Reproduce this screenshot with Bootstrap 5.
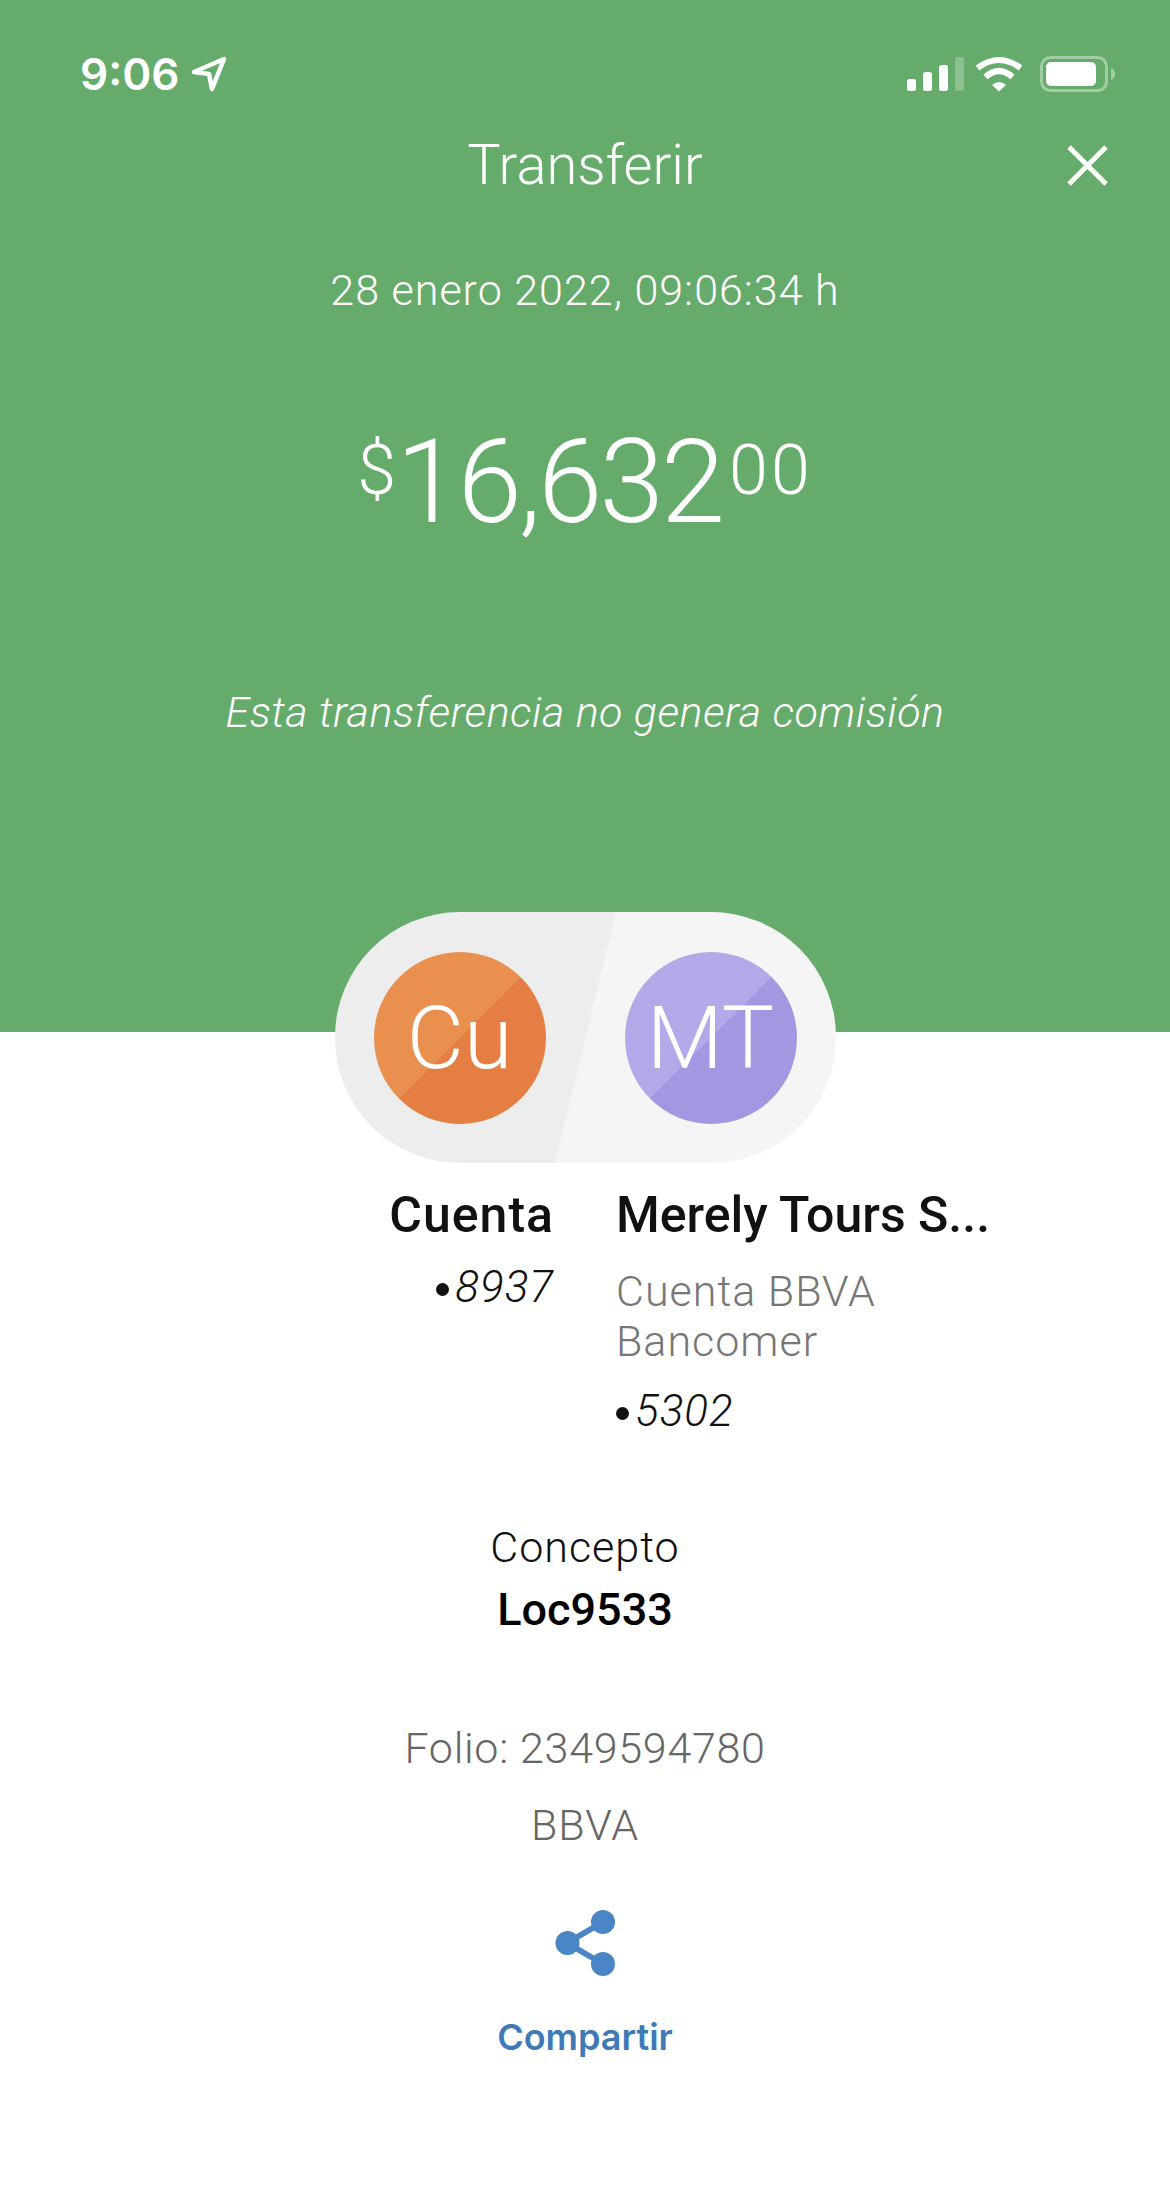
<!DOCTYPE html>
<html lang="es">
<head>
    <meta charset="UTF-8">
    <meta name="viewport" content="width=device-width, initial-scale=1.0">
    <title>Transferir</title>
    <link href="https://cdn.jsdelivr.net/npm/bootstrap@5.3.0/dist/css/bootstrap.min.css" rel="stylesheet">
    <style>
        body {
            background-color: #fff;
            font-family: Roboto, "Liberation Sans", sans-serif;
            font-weight: 300;
            color: #111;
        }
        .hero {
            background-color: #65ab6c;
            color: #fff;
            height: 1032px;
            text-align: center;
        }
        .status-bar {
            padding: 56px 55px 0 80px;
            height: 92px;
        }
        .clock {
            font-family: Inter, sans-serif;
            font-weight: 600;
            font-size: 44px;
            line-height: 36px;
            margin-right: 4px;
        }
        .title-row {
            margin-top: 43px;
            height: 60px;
            padding: 0 62px;
        }
        .title-text {
            font-size: 56px;
            line-height: 60px;
        }
        .title-side {
            width: 41px;
        }
        .date-text {
            margin-top: 70px;
            font-size: 43px;
            line-height: 50px;
            letter-spacing: 1px;
        }
        .amount {
            margin-top: 102px;
            height: 130px;
            font-size: 116px;
            line-height: 130px;
            letter-spacing: -3px;
        }
        .amount-sup {
            font-size: 70px;
            line-height: 68px;
            letter-spacing: 3px;
            align-self: flex-start;
            margin-top: 19px;
        }
        .sup-currency {
            letter-spacing: 0;
        }
        .sup-cents {
            margin-left: 7px;
        }
        .no-fee {
            margin-top: 140px;
            font-size: 43px;
            line-height: 50px;
            letter-spacing: .5px;
            font-style: italic;
        }
        .pill {
            width: 501px;
            height: 251px;
            margin: -120px auto 0;
            padding: 0 39px;
            border-radius: 125px;
            background: linear-gradient(103.66deg, #ededed 50%, #f5f5f5 50%);
            position: relative;
        }
        .avatar {
            width: 172px;
            height: 172px;
            color: #fff;
            font-size: 88px;
        }
        .avatar-orange {
            background: linear-gradient(135deg, #e9904f 50%, #e47e42 50%);
        }
        .avatar-purple {
            background: linear-gradient(135deg, #b3a9e9 50%, #a497e2 50%);
        }
        .names {
            margin-top: 24px;
        }
        .name-left {
            padding-right: 31px;
        }
        .name-left .name-text {
            letter-spacing: 1px;
        }
        .name-right {
            padding-left: 31px;
        }
        .name-text {
            font-weight: 500;
            font-size: 50px;
            line-height: 56px;
            white-space: nowrap;
        }
        .acct {
            font-size: 44px;
            line-height: 50px;
            letter-spacing: 1px;
            font-style: italic;
            color: #111;
        }
        .acct-left {
            margin-top: 19px;
        }
        .acct-right {
            margin-top: 20px;
        }
        .dot {
            display: inline-block;
            width: 13px;
            height: 13px;
            margin-right: 6px;
            vertical-align: 6px;
            background-color: #111;
        }
        .bank-text {
            margin-top: 23px;
            width: 290px;
            font-size: 43px;
            line-height: 50px;
            letter-spacing: 1px;
            color: #777;
        }
        .concept-label {
            margin-top: 86px;
            font-size: 43px;
            line-height: 50px;
            letter-spacing: 1px;
        }
        .concept-value {
            margin-top: 13px;
            font-weight: 500;
            font-size: 45px;
            line-height: 50px;
            color: #000;
        }
        .folio {
            margin-top: 88px;
            font-size: 43px;
            line-height: 50px;
            letter-spacing: .7px;
            color: #666;
        }
        .bank-name {
            margin-top: 27px;
            font-size: 43px;
            line-height: 50px;
            letter-spacing: 1px;
            color: #666;
        }
        .share {
            margin-top: 60px;
        }
        .share-label {
            margin-top: 39px;
            font-family: Inter, sans-serif;
            font-weight: 600;
            font-size: 36px;
            line-height: 44px;
            color: #3f7ab8;
        }
    </style>
</head>
<body>

    <header class="hero">
        <div class="status-bar d-flex justify-content-between align-items-start">
            <div class="d-flex align-items-center gap-2">
                <span class="clock">9:06</span>
                <svg width="36" height="36" viewBox="0 0 36 36" fill="none" stroke="#fff" stroke-width="4.5" stroke-linejoin="round">
                    <path d="M3 16 33 3 21 33 18 18Z"/>
                </svg>
            </div>
            <svg width="208" height="36" viewBox="0 0 208 36" fill="#fff">
                <!-- barras de señal -->
                <rect x="0" y="23" width="9" height="12" rx="2.5"/>
                <rect x="16" y="16" width="9" height="19" rx="2.5"/>
                <rect x="32" y="9" width="9" height="26" rx="2.5"/>
                <rect x="48" y="1" width="9" height="34" rx="2.5" opacity=".25"/>
                <!-- wifi -->
                <path d="M70.500 12Q92-4 113.500 12" fill="none" stroke="#fff" stroke-width="6"/>
                <path d="M78.500 21Q92 9 105.500 21" fill="none" stroke="#fff" stroke-width="6"/>
                <path d="M85 29Q92 23 99 29L92 35.500Z"/>
                <!-- bateria -->
                <rect x="134.500" y="1.500" width="65" height="33" rx="9" fill="none" stroke="#fff" stroke-opacity=".4" stroke-width="3"/>
                <rect x="139" y="6" width="50" height="24" rx="5"/>
                <path d="M204 12C207 13 208 15.500 208 18C208 20.500 207 23 204 24Z" opacity=".4"/>
            </svg>
        </div>

        <div class="title-row d-flex justify-content-between align-items-center">
            <span class="title-side"></span>
            <span class="title-text">Transferir</span>
            <svg class="title-side" width="41" height="41" viewBox="0 0 41 41" stroke="#fff" stroke-width="5">
                <path d="M2 2 39 39M39 2 2 39"/>
            </svg>
        </div>

        <div class="date-text">28 enero 2022, 09:06:34 h</div>

        <div class="amount d-flex justify-content-center">
            <span class="amount-sup sup-currency">$</span>
            <span>16,632</span>
            <span class="amount-sup sup-cents">00</span>
        </div>

        <div class="no-fee">Esta transferencia no genera comisión</div>
    </header>

    <div class="pill d-flex justify-content-between align-items-center">
        <div class="avatar avatar-orange rounded-circle d-flex align-items-center justify-content-center">Cu</div>
        <div class="avatar avatar-purple rounded-circle d-flex align-items-center justify-content-center">MT</div>
    </div>

    <div class="names row g-0">
        <div class="col-6 name-left text-end">
            <div class="name-text">Cuenta</div>
            <div class="acct acct-left"><span class="dot rounded-circle"></span>8937</div>
        </div>
        <div class="col-6 name-right">
            <div class="name-text">Merely Tours S...</div>
            <div class="bank-text">Cuenta BBVA Bancomer</div>
            <div class="acct acct-right"><span class="dot rounded-circle"></span>5302</div>
        </div>
    </div>

    <div class="text-center">
        <div class="concept-label">Concepto</div>
        <div class="concept-value">Loc9533</div>
        <div class="folio">Folio: 2349594780</div>
        <div class="bank-name">BBVA</div>
        <svg class="share" width="60" height="66" viewBox="0 0 60 66" fill="#4a86c5" stroke="#4a86c5">
            <path d="M12 33 48 12M12 33 48 54" stroke-width="6" fill="none"/>
            <circle cx="12.500" cy="33" r="12" stroke="none"/>
            <circle cx="48" cy="12" r="12" stroke="none"/>
            <circle cx="48" cy="54" r="12" stroke="none"/>
        </svg>
        <div class="share-label">Compartir</div>
    </div>

    <script src="https://cdn.jsdelivr.net/npm/bootstrap@5.3.0/dist/js/bootstrap.bundle.min.js"></script>
</body>
</html>
